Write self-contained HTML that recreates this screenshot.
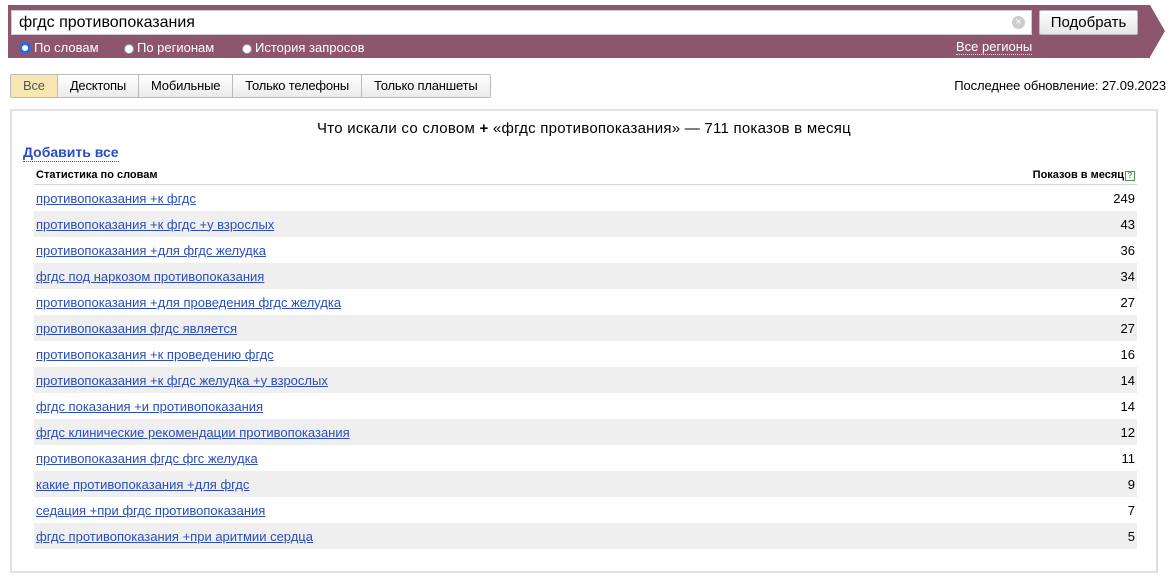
<!DOCTYPE html>
<html><head><meta charset="utf-8"><style>
body{margin:0;width:1174px;height:582px;background:#fff;font-family:"Liberation Sans",Arial,sans-serif;position:relative;overflow:hidden}
.bar{position:absolute;left:8px;top:5px;width:1142px;height:53px;background:#8e566c}
.tip{position:absolute;left:1150px;top:5px;width:0;height:0;border-top:26.5px solid transparent;border-bottom:26.5px solid transparent;border-left:15px solid #8e566c}
.inp{position:absolute;left:11px;top:10px;width:1021px;height:25px;background:#fff;box-sizing:border-box;border:1px solid #ccc;font-size:16px;line-height:23px;padding-left:7px;color:#000}
.clr{position:absolute;left:1012px;top:16px;width:13px;height:13px;border-radius:50%;background:#ccc;color:#fff;font-size:11px;line-height:13px;text-align:center}
.btn{position:absolute;left:1039px;top:10px;width:99px;height:25px;box-sizing:border-box;border:1px solid #b9b9b9;border-radius:2px;background:linear-gradient(#fff,#e6e6e6);font-size:15px;line-height:23px;text-align:center}
.rad{position:absolute;top:40px;font-size:13px;color:#fff;line-height:15px}
.rad i{display:inline-block;width:10px;height:10px;border-radius:50%;background:#fff;border:1px solid #999;vertical-align:-2px;margin-right:3px;box-sizing:border-box}
.rad i.on{border:3px solid #2a6ad7;width:12px;height:12px;vertical-align:-2px}
.reg{position:absolute;left:956px;top:39px;color:#fff;font-size:13px;border-bottom:1px dotted #ddd;line-height:15px}
.tabs{position:absolute;left:10px;top:74px;height:22px;display:flex;border:1px solid #bbb;border-radius:2px}
.tabs div{font-size:13px;line-height:21px;padding:0 12px;border-left:1px solid #bbb;background:linear-gradient(#fff,#ebebeb);letter-spacing:-0.2px}
.tabs div:first-child{border-left:none;background:#f7e8b3;color:#555;padding:0 12px}
.upd{position:absolute;right:8px;top:78px;font-size:13px;letter-spacing:-0.1px}
.panel{position:absolute;left:10px;top:109px;width:1148px;height:464px;box-sizing:border-box;border:2px solid #e2e2e2;border-right-color:#ddd}
.title{position:absolute;left:0;right:0;top:9px;text-align:center;font-size:15px;letter-spacing:0.25px}
.add{position:absolute;left:11px;top:33px;font-size:14px;font-weight:bold;color:#2a4dbb;border-bottom:1px dotted #2a4dbb;line-height:17px}
table{position:absolute;left:22px;top:55px;width:1103px;border-collapse:collapse}
th{font-size:11px;font-weight:bold;text-align:left;height:18px;border-bottom:1px solid #d6d0e0;padding:0 2px}
th.r{text-align:right}
td{height:26px;font-size:13px;padding:0 2px}
td a{color:#2a4dbb;text-decoration:underline}
td.n{text-align:right}
tr:nth-child(odd) td{background:#efefef}
.q{display:inline-block;width:8px;height:8px;border:1px solid #4a9a4a;color:#4a9a4a;font-size:8px;line-height:8px;text-align:center;vertical-align:0;margin-left:1px}
</style></head><body>
<div class="bar"></div><div class="tip"></div>
<div class="inp">фгдс противопоказания</div><div class="clr">×</div>
<div class="btn">Подобрать</div>
<div class="rad" style="left:19px"><i class="on"></i>По словам</div>
<div class="rad" style="left:124px"><i></i>По регионам</div>
<div class="rad" style="left:242px"><i></i>История запросов</div>
<div class="reg">Все регионы</div>
<div class="tabs"><div>Все</div><div>Десктопы</div><div>Мобильные</div><div>Только телефоны</div><div>Только планшеты</div></div>
<div class="upd">Последнее обновление: 27.09.2023</div>
<div class="panel">
<div class="title">Что искали со словом <b>+</b> «фгдс противопоказания» — 711 показов в месяц</div>
<div class="add">Добавить все</div>
<table>
<tr><th>Статистика по словам</th><th class="r">Показов в месяц<span class="q">?</span></th></tr>
<tr><td><a>противопоказания +к фгдс</a></td><td class="n">249</td></tr>
<tr><td><a>противопоказания +к фгдс +у взрослых</a></td><td class="n">43</td></tr>
<tr><td><a>противопоказания +для фгдс желудка</a></td><td class="n">36</td></tr>
<tr><td><a>фгдс под наркозом противопоказания</a></td><td class="n">34</td></tr>
<tr><td><a>противопоказания +для проведения фгдс желудка</a></td><td class="n">27</td></tr>
<tr><td><a>противопоказания фгдс является</a></td><td class="n">27</td></tr>
<tr><td><a>противопоказания +к проведению фгдс</a></td><td class="n">16</td></tr>
<tr><td><a>противопоказания +к фгдс желудка +у взрослых</a></td><td class="n">14</td></tr>
<tr><td><a>фгдс показания +и противопоказания</a></td><td class="n">14</td></tr>
<tr><td><a>фгдс клинические рекомендации противопоказания</a></td><td class="n">12</td></tr>
<tr><td><a>противопоказания фгдс фгс желудка</a></td><td class="n">11</td></tr>
<tr><td><a>какие противопоказания +для фгдс</a></td><td class="n">9</td></tr>
<tr><td><a>седация +при фгдс противопоказания</a></td><td class="n">7</td></tr>
<tr><td><a>фгдс противопоказания +при аритмии сердца</a></td><td class="n">5</td></tr>
</table>
</div>
</body></html>
